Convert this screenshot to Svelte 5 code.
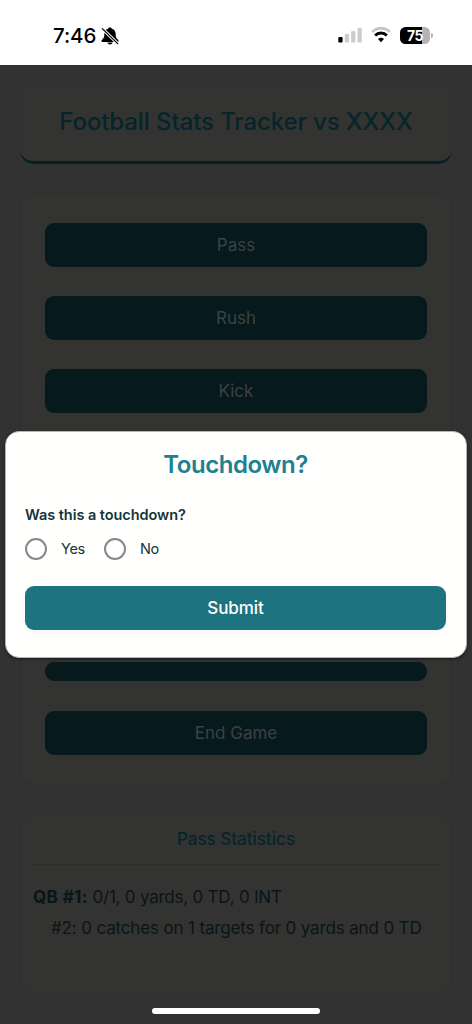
<script>
  // unnamed rows keep their slot in the column, short ones are collapsed
  const plays = [
    { name: 'Pass' },
    { name: 'Rush' },
    { name: 'Kick' },
    { name: '' },
    { name: '' },
    { name: '' },
    { name: '', short: true },
    { name: 'End Game' }
  ];

  const quarterbacks = [
    {
      name: 'QB #1:',
      line: '0/1, 0 yards, 0 TD, 0 INT',
      receivers: ['#2: 0 catches on 1 targets for 0 yards and 0 TD']
    }
  ];

  let touchdown = $state('');
</script>

<div class="phone">
  <div class="status">
    <div class="clock">
      <span class="time">7:46</span>
      <svg class="bell" width="18" height="18" viewBox="0 0 18 18">
        <path d="M9 .4c-1 0-1.700.5-1.900 1.300C4.500 2.600 3.300 4.600 3.300 7.200c0 2.700-.5 3.700-1.600 4.800-.7.7-1.200 1.100-1.200 1.900 0 .6.4 1 1 1h15c.6 0 1-.4 1-1 0-.8-.5-1.200-1.200-1.900-1.100-1.100-1.600-2.100-1.600-4.800 0-2.600-1.200-4.600-3.800-5.500C10.700.9 10 .4 9 .4z" />
        <path d="M6.400 15.600h5.200c-.2 1.200-1.300 1.900-2.600 1.900s-2.400-.7-2.600-1.900z" />
        <path d="M1 1.300 17 16.900" stroke="#fff" stroke-width="3.200" />
        <path d="M1.300 1.600 16.700 16.600" stroke="#000" stroke-width="1.300" stroke-linecap="round" />
      </svg>
    </div>
    <div class="signals">
      <svg width="24" height="16" viewBox="0 0 24 16">
        <rect x="0.300" y="10" width="4.300" height="5.500" rx="1" />
        <rect x="6.800" y="7" width="4.300" height="8.500" rx="1" fill="#ccc" />
        <rect x="13.100" y="4" width="4.300" height="11.500" rx="1" fill="#ccc" />
        <rect x="19.500" y="0.800" width="4.300" height="14.700" rx="1" fill="#ccc" />
      </svg>
      <svg width="20" height="16" viewBox="0 0 20 16" fill="none">
        <path d="M1.100 5a12.600 12.600 0 0 1 17.800 0" stroke="#c4c4c4" stroke-width="2.700" />
        <path d="M4.100 8.500a8.300 8.300 0 0 1 11.800 0" stroke="#000" stroke-width="2.900" />
        <path d="M7 12.100a4.200 4.200 0 0 1 6 0L10 15.200z" fill="#000" />
      </svg>
      <div class="battery"><span>75</span></div>
      <i class="nub"></i>
    </div>
  </div>

  <main>
    <header class="card title"><h1>Football Stats Tracker vs XXXX</h1></header>

    <section class="card plays">
      {#each plays as play}
        <button class="play" class:short={play.short}>{play.name}</button>
      {/each}
    </section>

    <section class="card stats">
      <h2>Pass Statistics</h2>
      {#each quarterbacks as qb}
        <p class="qb"><strong>{qb.name}</strong> {qb.line}</p>
        {#each qb.receivers as receiver}
          <p class="receiver">{receiver}</p>
        {/each}
      {/each}
    </section>

    <section class="card next"></section>
  </main>

  <div class="modal">
    <h3>Touchdown?</h3>
    <p class="question">Was this a touchdown?</p>
    <div class="choices">
      <label><input type="radio" name="touchdown" value="yes" bind:group={touchdown} /><span>Yes</span></label>
      <label><input type="radio" name="touchdown" value="no" bind:group={touchdown} /><span>No</span></label>
    </div>
    <button class="submit">Submit</button>
  </div>

  <div class="home"></div>
</div>

<style>
  :global(body) {
    background: #323232;
  }

  .phone {
    position: relative;
    width: 472px;
    height: 1024px;
    overflow: hidden;
    background: #323232;
    font-family: Inter, 'Liberation Sans', sans-serif;
    color: #0a1518;
  }

  .phone * {
    box-sizing: border-box;
  }

  h1, h2, h3, p {
    margin: 0;
    white-space: nowrap;
  }

  button {
    display: block;
    width: 100%;
    border: none;
    border-radius: 9px;
    font-family: inherit;
  }

  .status {
    display: flex;
    justify-content: space-between;
    height: 65px;
    padding: 26px 39px 0 53px;
    background: #fff;
    color: #000;
  }

  .clock, .signals {
    display: flex;
    align-items: flex-start;
  }

  .time {
    font-size: 20.5px;
    font-weight: 500;
    line-height: 20px;
    letter-spacing: -0.1px;
    width: 48px;
  }

  .bell {
    margin-top: 1px;
  }

  .signals {
    padding-top: 1px;
  }

  .signals svg:first-child {
    margin-right: 9px;
  }

  .battery {
    width: 30px;
    height: 17px;
    margin-left: 9px;
    border-radius: 5.5px;
    background: linear-gradient(90deg, #000 22.5px, #b4b4b4 22.5px);
    color: #fff;
    font-size: 14px;
    font-weight: 700;
    line-height: 17px;
    text-align: center;
    letter-spacing: -0.5px;
  }

  .nub {
    width: 2px;
    height: 5px;
    margin: 6px 0 0 1px;
    border-radius: 0 2px 2px 0;
    background: #b4b4b4;
  }

  main {
    padding: 18px 20px 0;
  }

  .card {
    border: 1px solid #2f2f2e;
    border-radius: 14px;
    background: #333331;
  }

  .title {
    height: 81px;
    border: none;
    border-bottom: 3px solid #061f24;
    text-align: center;
  }

  h1 {
    color: #06252b;
    font-size: 24px;
    font-weight: 500;
    line-height: 78px;
    letter-spacing: -0.1px;
  }

  .plays {
    display: flex;
    flex-direction: column;
    gap: 29.3px;
    height: 592px;
    margin-top: 29px;
    padding: 28.6px 24px 0;
  }

  .play {
    flex: none;
    height: 44px;
    background: #06191c;
    color: #3d4142;
    font-size: 17px;
  }

  .play.short {
    height: 19px;
  }

  .stats {
    height: 180px;
    margin-top: 29px;
    padding: 0 12px;
  }

  h2 {
    height: 50px;
    border-bottom: 1px solid #2d2d2b;
    color: #06252b;
    font-size: 17px;
    font-weight: 500;
    line-height: 49px;
    text-align: center;
  }

  .qb {
    padding-top: 17px;
    font-size: 17px;
    line-height: 31px;
    letter-spacing: -0.22px;
  }

  .qb strong {
    letter-spacing: 0.4px;
  }

  .receiver {
    padding-left: 18px;
    font-size: 17px;
    line-height: 31px;
    letter-spacing: -0.15px;
  }

  .next {
    height: 40px;
    margin-top: 25px;
  }

  .modal {
    position: absolute;
    top: 431px;
    left: 5px;
    width: 462px;
    height: 227px;
    padding: 0 20px 0 19px;
    border: 1px solid #b5b5b3;
    border-radius: 14px;
    background: #fffffd;
    box-shadow: 0 1px 3px #0008;
  }

  h3 {
    color: #218090;
    font-size: 24px;
    font-weight: 600;
    line-height: 66px;
    letter-spacing: -0.45px;
    text-align: center;
  }

  .question {
    color: #13343b;
    font-size: 14.5px;
    font-weight: 600;
    line-height: 34px;
    letter-spacing: -0.05px;
  }

  .choices {
    display: flex;
    height: 33px;
    color: #13343b;
    font-size: 14.5px;
    letter-spacing: -0.3px;
  }

  label {
    display: flex;
    align-items: center;
  }

  label + label {
    margin-left: 19px;
  }

  input {
    appearance: none;
    width: 22px;
    height: 22px;
    margin: 0 14px 0 0;
    border: 2px solid #88888b;
    border-radius: 50%;
  }

  .submit {
    height: 44px;
    margin-top: 21px;
    background: #1d737f;
    color: #fffffd;
    font-size: 17px;
    font-weight: 500;
    letter-spacing: -0.1px;
    box-shadow: 0 3px 6px #00000008;
  }

  .home {
    position: absolute;
    bottom: 10px;
    left: 152px;
    width: 168px;
    height: 6px;
    border-radius: 3px;
    background: #fff;
  }
</style>
